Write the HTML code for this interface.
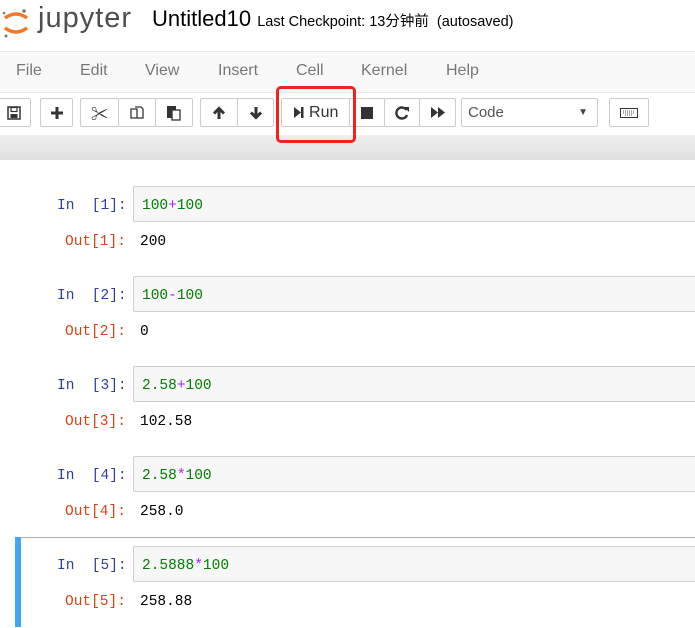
<!DOCTYPE html>
<html><head><meta charset="utf-8"><style>
body{margin:0;width:695px;height:622px;overflow:hidden;background:#fff;font-family:"Liberation Sans","Noto Sans CJK SC",sans-serif;position:relative}
.abs{position:absolute}
.btn{position:absolute;top:98px;height:29px;border:1px solid #ccc;border-radius:2px;background:#fff;box-sizing:border-box;display:flex;align-items:center;justify-content:center;color:#333;font-size:16px}
.mono{font-family:"Liberation Mono",monospace;font-size:14.5px;white-space:pre}
.inp{position:absolute;left:133px;width:580px;height:36px;border:1px solid #cfcfcf;border-radius:2px;background:#f7f7f7;box-sizing:border-box}
.g{color:#008000}.p{color:#aa22ff}
</style></head><body>
<svg class="abs" style="left:0;top:6px" width="32" height="32" viewBox="0 0 32 32">
<path d="M5 12 Q16 4 27 12" stroke="#f37726" stroke-width="3.5" fill="none"/>
<path d="M5 22 Q16 30 27 22" stroke="#f37726" stroke-width="3.5" fill="none"/>
<circle cx="24" cy="5" r="1.8" fill="#767677"/><circle cx="4" cy="7" r="1.3" fill="#767677"/><circle cx="6" cy="30" r="1.5" fill="#767677"/>
</svg>
<div class="abs" style="left:38px;top:2px;font-size:29px;color:#4e4e4e;letter-spacing:1px">jupyter</div>
<div class="abs" style="left:152px;top:6px;font-size:22px;color:#000">Untitled10 <span style="font-size:14.5px">Last Checkpoint: 13分钟前 &nbsp;(autosaved)</span></div>
<div class="abs" style="left:0;top:51px;width:695px;height:40px;border-top:1px solid #e7e7e7;border-bottom:1px solid #e7e7e7;background:#f8f8f8"></div>
<div class="abs" style="top:62px;font-size:16px;color:#777;left:0;width:695px">
<span class="abs" style="left:16px">File</span><span class="abs" style="left:80px">Edit</span><span class="abs" style="left:145px">View</span><span class="abs" style="left:218px">Insert</span><span class="abs" style="left:296px">Cell</span><span class="abs" style="left:361px">Kernel</span><span class="abs" style="left:446px">Help</span></div>
<div class="btn" style="left:-3px;width:34px"><svg width="14" height="14"><rect x="1" y="1" width="12" height="12" fill="none" stroke="#333" stroke-width="1.5"/><rect x="4" y="1.5" width="6" height="4" fill="none" stroke="#333" stroke-width="1.2"/><rect x="3.5" y="8" width="7" height="4" fill="#333"/></svg></div>
<div class="btn" style="left:40px;width:33px"><svg width="14" height="14"><path d="M7 1v12M1 7h12" stroke="#333" stroke-width="3"/></svg></div>
<div class="btn" style="left:80px;width:39px;font-size:17px">✂</div>
<div class="btn" style="left:118px;width:38px"><svg width="16" height="16"><path d="M2 4h6v9H2z M6 2h6l2 2v9H8" fill="none" stroke="#333" stroke-width="1.3"/></svg></div>
<div class="btn" style="left:155px;width:38px"><svg width="16" height="16"><rect x="1" y="1" width="9" height="12" fill="#333"/><rect x="6" y="5" width="8" height="10" fill="#fff" stroke="#333" stroke-width="1.3"/></svg></div>
<div class="btn" style="left:200px;width:38px"><svg width="14" height="14"><path d="M7 13V3M2 7.5L7 2.5L12 7.5" stroke="#333" stroke-width="3" fill="none"/></svg></div>
<div class="btn" style="left:237px;width:37px"><svg width="14" height="14"><path d="M7 1v10M2 6.5L7 11.5L12 6.5" stroke="#333" stroke-width="3" fill="none"/></svg></div>
<div class="btn" style="left:281px;width:69px;font-size:16px"><svg width="12" height="13"><path d="M1 1 L8 6.5 L1 12Z" fill="#333"/><rect x="8" y="1" width="2.5" height="11" fill="#333"/></svg>&nbsp;Run</div>
<div class="btn" style="left:349px;width:36px"><div style="width:12px;height:12px;background:#333"></div></div>
<div class="btn" style="left:384px;width:36px"><svg width="16" height="16"><path d="M12.5 5 A5.5 5.5 0 1 0 13 10" stroke="#333" stroke-width="2.4" fill="none"/><path d="M10 2 L15 2 L15 7Z" fill="#333"/></svg></div>
<div class="btn" style="left:419px;width:37px"><svg width="16" height="13"><path d="M1 1 L8 6.5 L1 12Z M8 1 L15 6.5 L8 12Z" fill="#333"/></svg></div>
<div class="btn" style="left:461px;width:137px;justify-content:flex-start;padding-left:6px;font-size:15px;color:#555">Code<span style="position:absolute;right:9px;font-size:10px;color:#444">▼</span></div>
<div class="btn" style="left:609px;width:40px"><svg width="18" height="10"><rect x="0.5" y="0.5" width="17" height="9" fill="#fff" stroke="#333"/><path d="M3 3h12M3 5h12M5 7h8" stroke="#555" stroke-dasharray="1 1"/></svg></div>
<div class="abs" style="left:0;top:135px;width:695px;height:25px;background:linear-gradient(#eee,#e0e0e0)"></div>
<div class="abs" style="left:276px;top:86px;width:80px;height:57px;border:3px solid #f0231c;border-radius:5px;box-sizing:border-box"></div>
<div class="abs" style="left:15px;top:537px;width:700px;height:90px;border-top:1px solid #ababab;"></div>
<div class="abs" style="left:15px;top:537px;width:6px;height:90px;background:#42a5f5"></div>

<div class="inp" style="top:186px"></div>
<div class="abs mono" style="left:57px;top:198px;color:#303f9f">In  [1]:</div>
<div class="abs mono" style="left:142px;top:198px"><span class="g">100</span><span class="p">+</span><span class="g">100</span></div>
<div class="abs mono" style="left:65px;top:234px;color:#d84315">Out[1]:</div>
<div class="abs mono" style="left:140px;top:234px">200</div>

<div class="inp" style="top:276px"></div>
<div class="abs mono" style="left:57px;top:288px;color:#303f9f">In  [2]:</div>
<div class="abs mono" style="left:142px;top:288px"><span class="g">100</span><span class="p">-</span><span class="g">100</span></div>
<div class="abs mono" style="left:65px;top:324px;color:#d84315">Out[2]:</div>
<div class="abs mono" style="left:140px;top:324px">0</div>

<div class="inp" style="top:366px"></div>
<div class="abs mono" style="left:57px;top:378px;color:#303f9f">In  [3]:</div>
<div class="abs mono" style="left:142px;top:378px"><span class="g">2.58</span><span class="p">+</span><span class="g">100</span></div>
<div class="abs mono" style="left:65px;top:414px;color:#d84315">Out[3]:</div>
<div class="abs mono" style="left:140px;top:414px">102.58</div>

<div class="inp" style="top:456px"></div>
<div class="abs mono" style="left:57px;top:468px;color:#303f9f">In  [4]:</div>
<div class="abs mono" style="left:142px;top:468px"><span class="g">2.58</span><span class="p">*</span><span class="g">100</span></div>
<div class="abs mono" style="left:65px;top:504px;color:#d84315">Out[4]:</div>
<div class="abs mono" style="left:140px;top:504px">258.0</div>

<div class="inp" style="top:546px"></div>
<div class="abs mono" style="left:57px;top:558px;color:#303f9f">In  [5]:</div>
<div class="abs mono" style="left:142px;top:558px"><span class="g">2.5888</span><span class="p">*</span><span class="g">100</span></div>
<div class="abs mono" style="left:65px;top:594px;color:#d84315">Out[5]:</div>
<div class="abs mono" style="left:140px;top:594px">258.88</div>
</body></html>
